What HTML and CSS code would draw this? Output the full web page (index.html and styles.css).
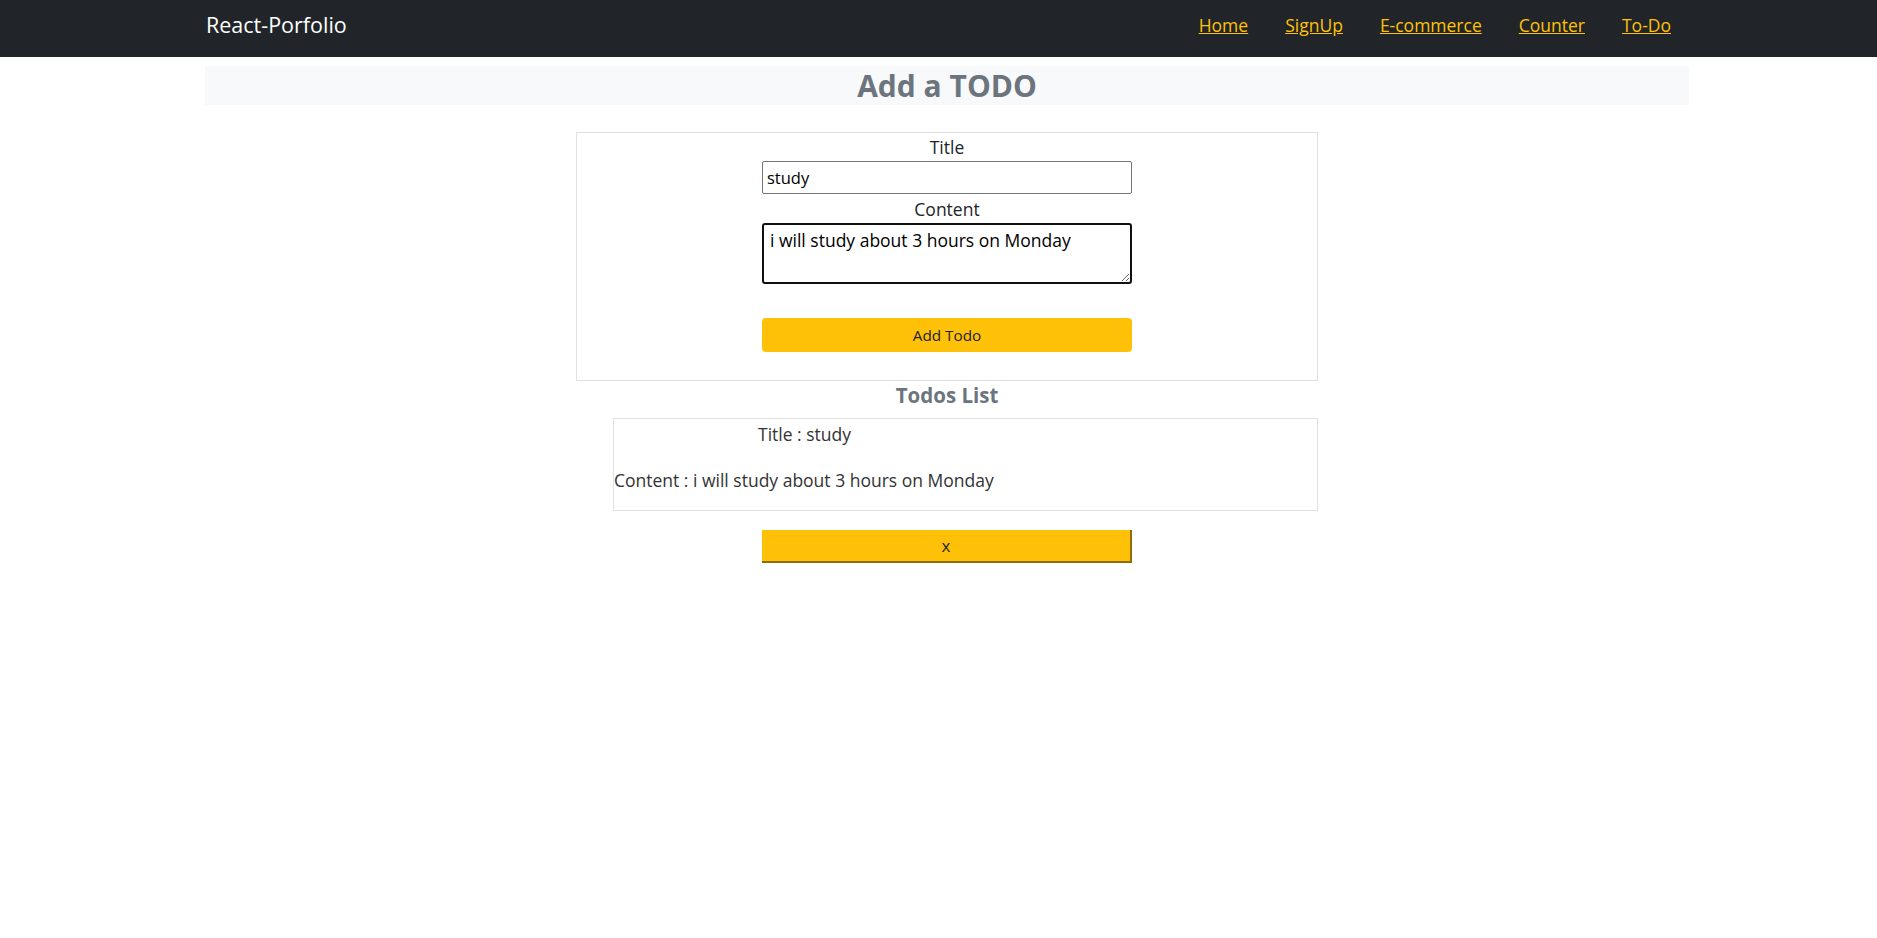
FILE: index.html
```html
<!DOCTYPE html>
<html lang="en">
<head>
<meta charset="utf-8">
<title>React-Porfolio</title>
<link rel="stylesheet" href="styles.css">
</head>
<body>
<nav class="navbar">
  <div class="nav-inner">
    <a class="brand" href="#">React-Porfolio</a>
    <ul class="nav-links">
      <li><a href="#">Home</a></li>
      <li><a href="#">SignUp</a></li>
      <li><a href="#">E-commerce</a></li>
      <li><a href="#">Counter</a></li>
      <li><a href="#">To-Do</a></li>
    </ul>
  </div>
</nav>
<main class="container">
  <h2 class="page-title">Add a TODO</h2>
  <form class="todo-form">
    <label class="field-label" for="title">Title</label>
    <input class="field-input" id="title" type="text" value="study">
    <label class="field-label" for="content">Content</label>
    <textarea class="field-area" id="content">i will study about 3 hours on Monday</textarea>
    <button class="add-btn" type="button">Add Todo</button>
  </form>
  <h4 class="list-title">Todos List</h4>
  <div class="todo-list">
    <div class="todo-item">
      <p class="todo-title">Title : study</p>
      <p class="todo-content">Content : i will study about 3 hours on Monday</p>
    </div>
    <button class="delete-btn" type="button">x</button>
  </div>
</main>
</body>
</html>
```
FILE: styles.css
```css
* { box-sizing: border-box; }
body {
  margin: 0;
  font-family: "Open Sans", "Noto Sans", sans-serif;
  font-size: 16px;
  line-height: 1.5;
  color: #212529;
  background: #fff;
}
.navbar {
  background: #212529;
  height: 57px;
}
.nav-inner {
  width: 1484px;
  margin-left: 205px;
  height: 100%;
  display: flex;
  align-items: center;
  justify-content: space-between;
  padding: 0 18px 0 1px;
}
.brand {
  color: #fff;
  text-decoration: none;
  font-size: 21.5px;
  padding-bottom: 6px;
}
.nav-links {
  list-style: none;
  margin: 0;
  padding: 0 0 6px 0;
  display: flex;
  gap: 37px;
}
.nav-links a {
  color: #ffc107;
  font-size: 17.5px;
}
.container {
  width: 1484px;
  margin-left: 205px;
}
.page-title {
  margin: 9px 0 0;
  background: #f8f9fa;
  color: #6c757d;
  font-size: 30px;
  font-weight: 700;
  line-height: 39px;
  height: 39px;
  text-align: center;
}
.todo-form {
  width: 742px;
  margin: 27px auto 0;
  border: 1px solid #dee2e6;
  display: flex;
  flex-direction: column;
  align-items: center;
  padding: 2px 0 28px;
}
.field-label {
  display: block;
  line-height: 24px;
  font-size: 17.5px;
}
.field-input {
  width: 370px;
  height: 33px;
  margin: 2px 0 3px;
  border: 1px solid #767676;
  border-radius: 2px;
  padding: 0 4px;
  font: inherit;
  font-size: 16.5px;
  color: #000;
}
.field-area {
  width: 370px;
  height: 61px;
  margin-top: 2px;
  border: 2px solid #101010;
  border-radius: 3px;
  padding: 3px 6px;
  font: inherit;
  font-size: 17.5px;
  line-height: 24px;
  color: #000;
  outline: none;
}
.add-btn {
  width: 370px;
  height: 34px;
  margin-top: 34px;
  background: #ffc107;
  border: 0;
  border-radius: 4px;
  font: inherit;
  font-size: 15.3px;
  color: #212529;
}
.list-title {
  margin: 0 0 8px;
  text-align: center;
  color: #6c757d;
  font-size: 20.5px;
  font-weight: 700;
  line-height: 29px;
}
.todo-list {
  width: 742px;
  margin: 0 auto;
  display: flex;
  flex-direction: column;
  align-items: center;
}
.todo-item {
  align-self: flex-end;
  width: 705px;
  height: 93px;
  border: 1px solid #dee2e6;
  color: #333;
  font-size: 17.5px;
  line-height: 24px;
}
.todo-title {
  margin: 3px 0 0;
  padding-left: 144px;
}
.todo-content {
  margin: 22px 0 0;
}
.delete-btn {
  width: 370px;
  height: 33px;
  margin-top: 19px;
  background: #ffc107;
  border: 0;
  border-right: 2px solid #8f6c00;
  border-bottom: 2px solid #8f6c00;
  font: inherit;
  font-size: 17px;
  color: #212529;
}
```
